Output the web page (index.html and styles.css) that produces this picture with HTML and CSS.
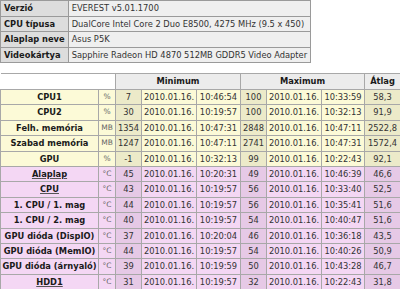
FILE: index.html
```html
<!DOCTYPE html>
<html>
<head>
<meta charset="utf-8">
<link rel="stylesheet" href="styles.css">
</head>
<body>
<table class="info">
  <tr><th>Verzió</th><td>EVEREST v5.01.1700</td></tr>
  <tr><th>CPU típusa</th><td>DualCore Intel Core 2 Duo E8500, 4275 MHz (9.5 x 450)</td></tr>
  <tr><th>Alaplap neve</th><td>Asus P5K</td></tr>
  <tr><th>Videokártya</th><td>Sapphire Radeon HD 4870 512MB GDDR5 Video Adapter</td></tr>
</table>
<table class="stats">
  <colgroup>
    <col class="c-label"><col class="c-unit"><col class="c-val"><col class="c-date"><col class="c-time">
    <col class="c-val"><col class="c-date"><col class="c-time2"><col class="c-avg">
  </colgroup>
  <tr class="head">
    <th class="blank" colspan="2"></th>
    <th colspan="3">Minimum</th>
    <th colspan="3">Maximum</th>
    <th>Átlag</th>
  </tr>
  <tr class="y"><th>CPU1</th><td class="u">%</td><td class="v">7</td><td>2010.01.16.</td><td>10:46:54</td><td class="v">100</td><td>2010.01.16.</td><td>10:33:59</td><td class="v">58,3</td></tr>
  <tr class="y"><th>CPU2</th><td class="u">%</td><td class="v">30</td><td>2010.01.16.</td><td>10:19:57</td><td class="v">100</td><td>2010.01.16.</td><td>10:32:13</td><td class="v">91,9</td></tr>
  <tr class="y"><th>Felh. memória</th><td class="u">MB</td><td class="v">1354</td><td>2010.01.16.</td><td>10:47:31</td><td class="v">2848</td><td>2010.01.16.</td><td>10:47:11</td><td class="v">2522,8</td></tr>
  <tr class="y"><th>Szabad memória</th><td class="u">MB</td><td class="v">1247</td><td>2010.01.16.</td><td>10:47:11</td><td class="v">2741</td><td>2010.01.16.</td><td>10:47:31</td><td class="v">1572,4</td></tr>
  <tr class="y"><th>GPU</th><td class="u">%</td><td class="v">-1</td><td>2010.01.16.</td><td>10:32:13</td><td class="v">99</td><td>2010.01.16.</td><td>10:22:43</td><td class="v">92,1</td></tr>
  <tr class="p"><th><u>Alaplap</u></th><td class="u">°C</td><td class="v">45</td><td>2010.01.16.</td><td>10:20:31</td><td class="v">49</td><td>2010.01.16.</td><td>10:46:39</td><td class="v">46,6</td></tr>
  <tr class="p"><th><u>CPU</u></th><td class="u">°C</td><td class="v">43</td><td>2010.01.16.</td><td>10:19:57</td><td class="v">56</td><td>2010.01.16.</td><td>10:33:40</td><td class="v">52,5</td></tr>
  <tr class="p"><th>1. CPU / 1. mag</th><td class="u">°C</td><td class="v">44</td><td>2010.01.16.</td><td>10:19:57</td><td class="v">56</td><td>2010.01.16.</td><td>10:35:41</td><td class="v">51,6</td></tr>
  <tr class="p"><th>1. CPU / 2. mag</th><td class="u">°C</td><td class="v">40</td><td>2010.01.16.</td><td>10:19:57</td><td class="v">54</td><td>2010.01.16.</td><td>10:40:47</td><td class="v">51,6</td></tr>
  <tr class="p"><th>GPU dióda (DispIO)</th><td class="u">°C</td><td class="v">37</td><td>2010.01.16.</td><td>10:20:04</td><td class="v">46</td><td>2010.01.16.</td><td>10:36:18</td><td class="v">43,5</td></tr>
  <tr class="p"><th>GPU dióda (MemIO)</th><td class="u">°C</td><td class="v">44</td><td>2010.01.16.</td><td>10:19:57</td><td class="v">54</td><td>2010.01.16.</td><td>10:40:26</td><td class="v">50,9</td></tr>
  <tr class="p"><th>GPU dióda (árnyaló)</th><td class="u">°C</td><td class="v">39</td><td>2010.01.16.</td><td>10:19:59</td><td class="v">50</td><td>2010.01.16.</td><td>10:43:28</td><td class="v">46,7</td></tr>
  <tr class="p"><th><u>HDD1</u></th><td class="u">°C</td><td class="v">31</td><td>2010.01.16.</td><td>10:19:57</td><td class="v">32</td><td>2010.01.16.</td><td>10:22:43</td><td class="v">31,8</td></tr>
</table>
</body>
</html>
```
FILE: styles.css
```css
html, body {
  margin: 0;
  padding: 0;
  background: #fff;
}
body {
  font-family: "DejaVu Sans", Verdana, sans-serif;
  font-size: 8.3px;
  color: #2a2a2a;
}
table {
  border-collapse: collapse;
}
.info {
  width: 308px;
}
.info th, .info td {
  border: 1px solid #9a9a9a;
  height: 14.5px;
  padding: 0 3px;
  white-space: nowrap;
  line-height: 14.5px;
}
.info th {
  background: #dddddd;
  text-align: left;
  font-weight: bold;
  width: 58px;
  color: #1a1a1a;
}
.info td {
  background: #efefef;
  color: #333;
}
.stats {
  margin-top: 10px;
  table-layout: fixed;
  width: 400px;
}
.c-label { width: 98px; }
.c-unit { width: 17px; }
.c-val { width: 26px; }
.c-date { width: 55px; }
.c-time { width: 44px; }
.c-time2 { width: 43px; }
.c-avg { width: 36px; }
.stats th, .stats td {
  border: 1px solid #a8a8a8;
  padding: 0;
  height: 14.4px;
  line-height: 14.4px;
  text-align: center;
  white-space: nowrap;
  overflow: hidden;
}
.stats th {
  font-weight: bold;
  color: #1a1a1a;
}
.stats .head th {
  background: #ececec;
  height: 15px;
  line-height: 15px;
}
.stats .head th.blank {
  background: #fff;
  border-left: none;
}
.stats td {
  color: #333;
}
.stats td.u {
  color: #666;
  font-size: 7.5px;
}
.y th, .y td { background: #fcfad7; }
.y td.v { background: #eceac9; }
.p th, .p td { background: #f4d7f4; }
.p td.v { background: #e6c9e6; }
.stats u {
  text-decoration-color: #555;
}
```
